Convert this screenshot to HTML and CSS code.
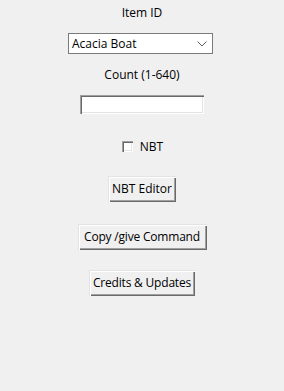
FILE: index.html
```html
<!DOCTYPE html>
<html lang="en">
<head>
    <meta charset="UTF-8">
    <meta name="viewport" content="width=device-width, initial-scale=1.0">
    <title>Give Command Generator</title>
    <link rel="stylesheet" href="styles.css">
</head>
<body>
    <div class="window">
        <div class="label label-id">Item ID</div>
        <div class="combo">
            <span class="combo-text">Acacia Boat</span>
            <svg class="combo-arrow" width="10" height="6" viewBox="0 0 10 6">
                <path d="M0.5 0.5 L5 5 L9.5 0.5" fill="none" stroke="#606060" stroke-width="1"/>
            </svg>
        </div>
        <div class="label label-count">Count (1-640)</div>
        <div class="entry"></div>
        <label class="check">
            <span class="check-box"></span>
            <span>NBT</span>
        </label>
        <button class="btn btn-nbt">NBT Editor</button>
        <button class="btn btn-copy">Copy /give Command</button>
        <button class="btn btn-credits">Credits &amp; Updates</button>
    </div>
</body>
</html>
```

FILE: styles.css
```css
html, body {
    margin: 0;
    padding: 0;
    background: #f0f0f0;
}

.window {
    width: 284px;
    height: 391px;
    display: flex;
    flex-direction: column;
    align-items: center;
    font-family: "Open Sans", "Noto Sans", sans-serif;
    font-size: 12px;
    color: #000;
}

.label {
    height: 16px;
    line-height: 16px;
}

.label-id {
    margin-top: 5px;
}

.combo {
    margin-top: 12px;
    margin-left: -3px;
    width: 143px;
    height: 19px;
    background: #fff;
    border: 1px solid #7a7a7a;
    display: flex;
    align-items: center;
    justify-content: space-between;
    box-sizing: content-box;
}

.combo-text {
    padding-left: 3px;
    line-height: 16px;
}

.combo-arrow {
    margin-right: 5px;
}

.label-count {
    margin-top: 13px;
}

.entry {
    margin-top: 12px;
    width: 124px;
    height: 19px;
    box-sizing: border-box;
    background: #fff;
    box-shadow: inset 1px 1px #a0a0a0, inset 2px 2px #696969, inset -1px -1px #fff, inset -2px -2px #e3e3e3;
}

.check {
    margin-top: 24px;
    display: flex;
    align-items: center;
    gap: 7px;
    height: 16px;
    margin-left: 1px;
}

.check-box {
    width: 11px;
    height: 11px;
    background: #fff;
    box-shadow: inset 1px 1px #a0a0a0, inset 2px 2px #696969, inset -1px -1px #fff, inset -2px -2px #e3e3e3;
}

.btn {
    font-family: "Open Sans", "Noto Sans", sans-serif;
    font-size: 12px;
    color: #000;
    background: #f0f0f0;
    border: none;
    padding: 0;
    height: 26px;
    white-space: nowrap;
    box-sizing: border-box;
    box-shadow: inset 1px 1px #e3e3e3, inset 2px 2px #fff, inset -1px -1px #696969, inset -2px -2px #a0a0a0;
    line-height: 20px;
}

.btn-nbt {
    margin-top: 22px;
    width: 68px;
}

.btn-copy {
    margin-top: 22px;
    width: 129px;
    letter-spacing: -0.2px;
}

.btn-credits {
    margin-top: 20px;
    width: 106px;
    letter-spacing: -0.2px;
}
```
